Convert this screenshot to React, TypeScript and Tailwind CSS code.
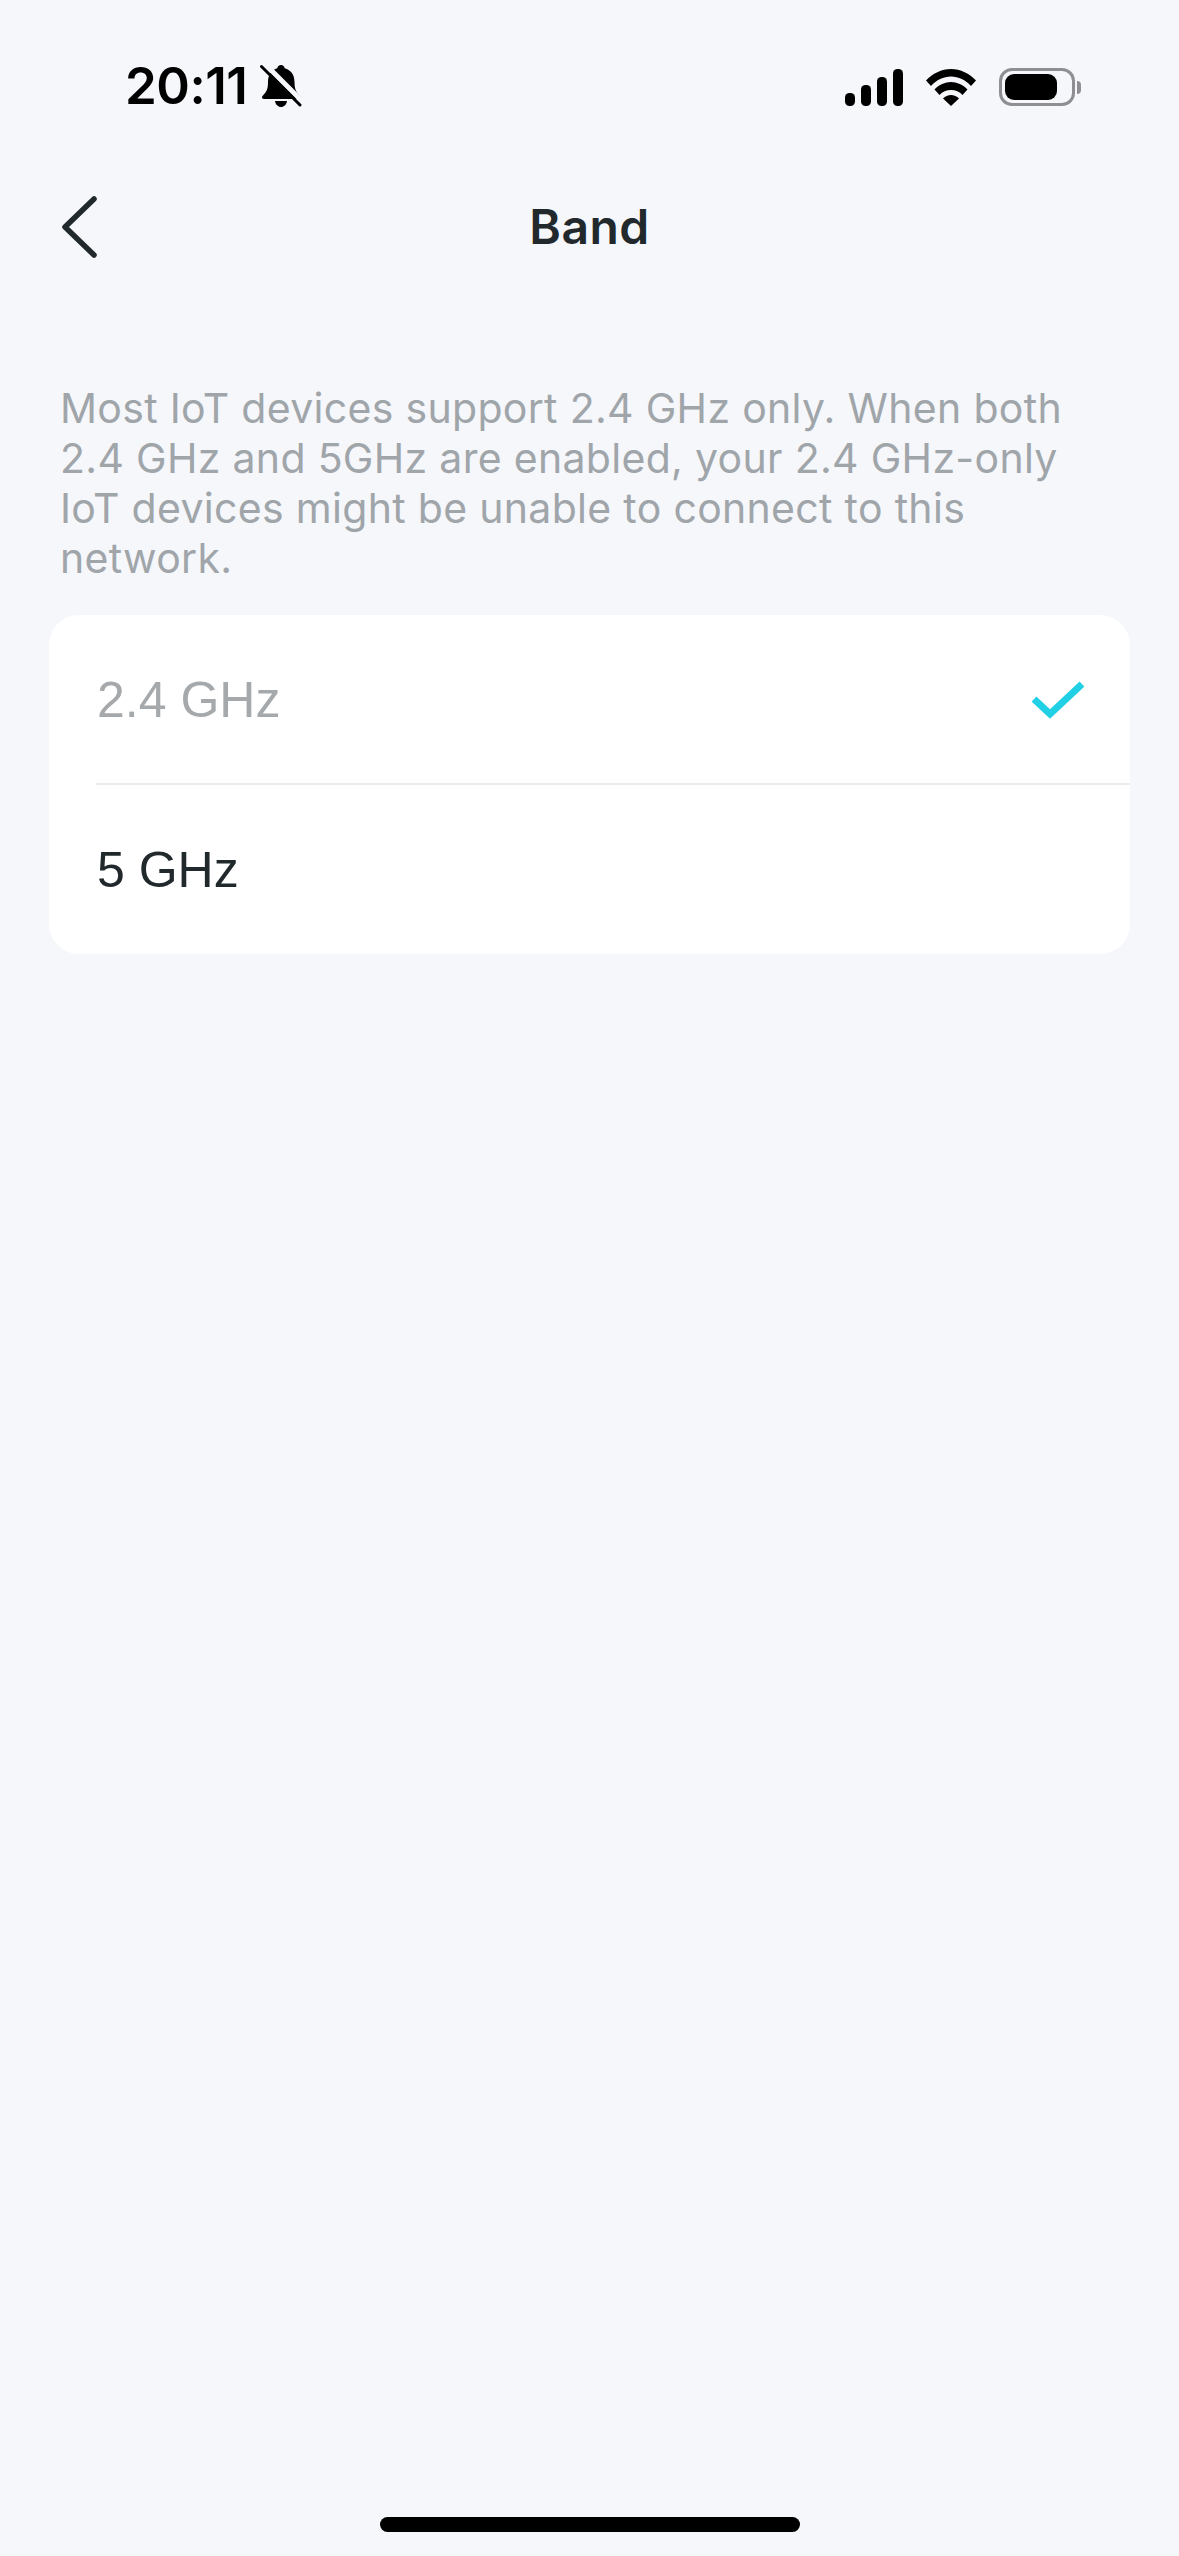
const FONT = "font-['Inter','Roboto',sans-serif]";

function BellOff() {
  return (
    <svg width="42" height="44" viewBox="0 0 42 44" fill="none">
      <path
        d="M21 1c2 0 3.500 1.500 3.700 3.300C31 6 34.500 11 34.500 18c0 5 .8 8 2.500 10.500l3 3.500c1 1.500 0 3-1.500 3H4c-1.800 0-2.700-1.700-1.500-3l3-3.500C7.300 26 8 23 8 18 8 11 11.500 6 17.300 4.300 17.500 2.500 19 1 21 1Z"
        fill="#000"
      />
      <path d="M15 37h12c-.5 3.500-3 6-6 6s-5.500-2.500-6-6Z" fill="#000" />
      <path d="M4 -1 44 39" stroke="#f5f7fb" strokeWidth="5" />
      <path d="M1.500 2.500 40 41" stroke="#000" strokeWidth="3" strokeLinecap="round" />
    </svg>
  );
}

function Signal() {
  return (
    <svg width="58" height="37" viewBox="0 0 58 37" fill="#000">
      <rect x="0" y="24" width="10" height="13" rx="4.500" />
      <rect x="16" y="16" width="10" height="21" rx="4.500" />
      <rect x="32" y="8" width="10" height="29" rx="4.500" />
      <rect x="48" y="0" width="10" height="37" rx="4.500" />
    </svg>
  );
}

function Wifi() {
  return (
    <svg width="50" height="37" viewBox="0 0 50 37" fill="#000">
      <path d="M0 11.500C6.500 4.500 15.500 0 25 0s18.500 4.500 25 11.500l-5 5.500C39.500 11 32.500 7.500 25 7.500S10.500 11 5 17Z" />
      <path d="M8.500 20.500C13 15.800 19 13 25 13s12 2.800 16.500 7.500l-5 5.500C33.500 22.800 29.500 21 25 21s-8.500 1.800-11.500 5Z" />
      <path d="M17 29.500c2.200-2.200 5-3.500 8-3.500s5.800 1.300 8 3.500L25 37Z" />
    </svg>
  );
}

function Battery() {
  return (
    <div className="flex items-center">
      <div className="h-[38px] w-[76px] rounded-[13px] border-[3px] border-[#8e8e93] p-[3px]">
        <div className="h-full w-[52px] rounded-[9px] bg-black" />
      </div>
      <div className="ml-[2px] h-[13px] w-[4px] rounded-r-full bg-[#8e8e93]" />
    </div>
  );
}

function Row({ label, muted, selected, short }: { label: string; muted?: boolean; selected?: boolean; short?: boolean }) {
  return (
    <div className={`flex items-center justify-between pr-[46px] ${short ? "h-[168px]" : "h-[169px]"}`}>
      <span
        className={`ml-[1px] mt-[2px] font-['Liberation_Sans',sans-serif] text-[50px] ${muted ? "text-[#a6a9ac]" : "text-[#22292d]"}`}
      >
        {label}
      </span>
      {selected ? (
        <svg className="mt-[2px]" width="52" height="38" viewBox="0 0 52 38" fill="none">
          <path d="M2 18 18 33 50 3" stroke="#22d0e5" strokeWidth="7" />
        </svg>
      ) : null}
    </div>
  );
}

export default function App() {
  return (
    <div className={`flex h-[2556px] w-[1179px] flex-col overflow-hidden bg-[#f5f7fb] ${FONT}`}>
      <div className="flex h-[110px] shrink-0 items-end justify-between pb-[2px] pl-[125px] pr-[98px]">
        <div className="flex items-center gap-[13px]">
          <span className="text-[51px] leading-[44px] font-semibold tracking-[-0.01em] text-black">20:11</span>
          <BellOff />
        </div>
        <div className="mb-[2px] flex items-center gap-[23px]">
          <Signal />
          <Wifi />
          <Battery />
        </div>
      </div>

      <div className="relative mt-[57px] flex h-[120px] shrink-0 items-center justify-center">
        <svg
          className="absolute left-[58px] top-[24px]"
          width="42"
          height="72"
          viewBox="0 0 42 72"
          fill="none"
          stroke="#22292d"
          strokeWidth="5.500"
          strokeLinecap="round"
          strokeLinejoin="round"
        >
          <path d="M36 8 7 36l29 28" />
        </svg>
        <h1 className="text-[48px] font-semibold tracking-[0.01em] text-[#22292d]">Band</h1>
      </div>

      <p className="mt-[96px] px-[60px] text-[41px] leading-[50px] tracking-[0.0075em] text-[#a0a5aa]">
        Most IoT devices support 2.4 GHz only. When both 2.4 GHz and 5GHz are enabled, your 2.4
        GHz-only IoT devices might be unable to connect to this network.
      </p>

      <div className="mx-[49px] mt-[32px] rounded-[30px] bg-white pl-[47px]">
        <div className="border-b-2 border-[#eaebef]">
          <Row label="2.4 GHz" muted selected short />
        </div>
        <Row label="5 GHz" />
      </div>

      <div className="mt-auto flex justify-center pb-[24px]">
        <div className="h-[15px] w-[420px] rounded-full bg-black" />
      </div>
    </div>
  );
}
